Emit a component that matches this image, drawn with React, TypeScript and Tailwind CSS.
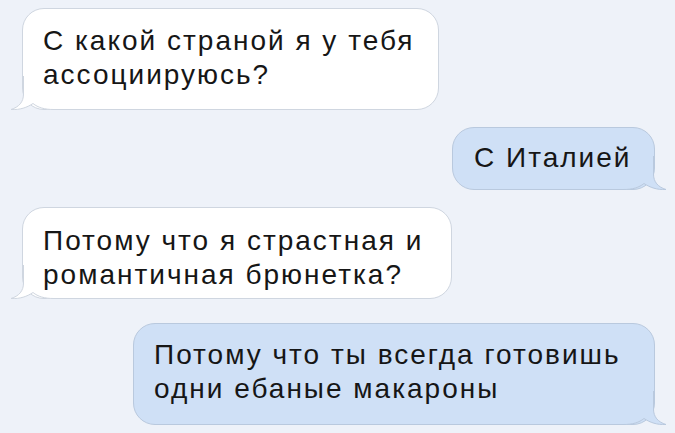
const BG = "#eef2f9";

type Side = "in" | "out";

// bubble tail drawn over the bottom corner of the bubble
function Tail({ side }: { side: Side }) {
  const fill = side === "in" ? "#ffffff" : "#cfe0f6";
  const stroke = side === "in" ? "#cfd6e0" : "#b9c9de";
  const flip = side === "out" ? "scale(-1,1) translate(-44,0)" : undefined;
  return (
    <svg
      width="44"
      height="34"
      viewBox="0 0 44 34"
      className={
        side === "in"
          ? "absolute left-[-13px] bottom-[-1px]"
          : "absolute right-[-13px] bottom-[-1px]"
      }
    >
      <g transform={flip}>
        <path
          d="M13.5 0 L13.5 18 C13.5 26 9 31 1 33.5 C10 34 17 31.5 23 27.5 C28 31.5 34 33.5 44 33.5 L44 0 Z"
          fill={fill}
        />
        <path
          d="M13.5 0 L13.5 18 C13.5 26 9 31 1 33.5 C10 34 17 31.5 23 27.5 C28 31.5 34 33.5 44 33.5"
          fill="none"
          stroke={stroke}
          strokeWidth="1"
        />
      </g>
    </svg>
  );
}

function Bubble({
  side,
  lines,
  className,
}: {
  side: Side;
  lines: string[];
  className: string;
}) {
  return (
    <div
      className={`relative border rounded-[22px] text-[28px] leading-[34px] tracking-[2px] text-[#161616] whitespace-nowrap ${
        side === "in"
          ? "self-start bg-white border-[#cfd6e0]"
          : "self-end bg-[#cfe0f6] border-[#b9c9de]"
      } ${className}`}
    >
      <Tail side={side} />
      <div className="relative">
        {lines.map((l) => (
          <div key={l}>{l}</div>
        ))}
      </div>
    </div>
  );
}

export default function App() {
  return (
    <div
      className="w-[675px] h-[433px] overflow-hidden flex flex-col pl-[22px] pr-[20px] pt-[8px]"
      style={{ backgroundColor: BG, fontFamily: '"Liberation Sans", Arial, sans-serif' }}
    >
      <Bubble
        side="in"
        className="w-[417px] h-[102px] pl-[20px] pt-[15px]"
        lines={["С какой страной я у тебя", "ассоциируюсь?"]}
      />
      <Bubble
        side="out"
        className="mt-[17px] w-[203px] h-[63px] pl-[21px] pt-[13px]"
        lines={["С Италией"]}
      />
      <Bubble
        side="in"
        className="mt-[17px] w-[430px] h-[92px] pl-[20px] pt-[16px]"
        lines={["Потому что я страстная и", "романтичная брюнетка?"]}
      />
      <Bubble
        side="out"
        className="mt-[24px] w-[522px] h-[102px] pl-[20px] pt-[14px]"
        lines={["Потому что ты всегда готовишь", "одни ебаные макароны"]}
      />
    </div>
  );
}
